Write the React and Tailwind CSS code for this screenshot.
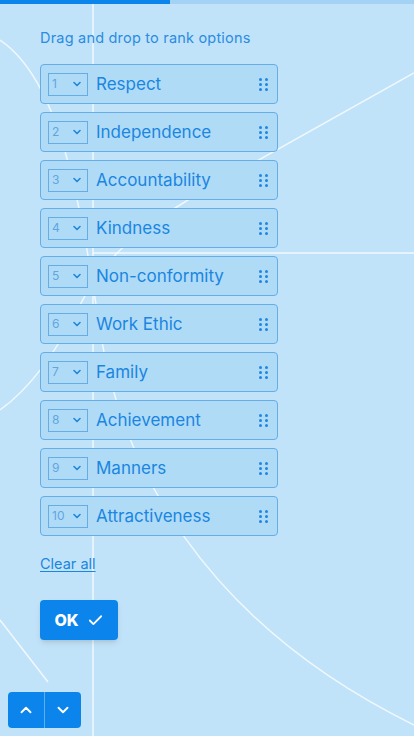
import { ChevronDown, ChevronUp, Check } from "lucide-react";

const options = [
  "Respect",
  "Independence",
  "Accountability",
  "Kindness",
  "Non-conformity",
  "Work Ethic",
  "Family",
  "Achievement",
  "Manners",
  "Attractiveness",
];

// background decoration lines
const Lines = () => (
  <svg className="absolute inset-0 pointer-events-none" width="414" height="736" viewBox="0 0 414 736" fill="none">
    <g stroke="#ffffff" strokeOpacity="0.75" strokeWidth="1.5">
      <line x1="93" y1="0" x2="93" y2="736" />
      <line x1="93" y1="253" x2="414" y2="253" />
      <path d="M0 40 C 60 80, 80 200, 100 330 C 120 460, 200 620, 414 725" />
      <path d="M414 73 L 200 193 C 130 233, 100 265, 80 305 C 60 345, 35 385, 0 410" />
      <path d="M0 620 L 48 682" />
    </g>
  </svg>
);

const Dots = () => (
  <div className="grid grid-cols-2 gap-x-[3px] gap-y-[2px]">
    {[0, 1, 2, 3, 4, 5].map((i) => (
      <span key={i} className="w-[3px] h-[3px] rounded-full bg-[#1f86dc]" />
    ))}
  </div>
);

const RankItem = ({ index, label }) => (
  <div className="h-10 w-[238px] flex items-center pl-[7px] pr-[9px] rounded border border-[#66ade8] bg-[#b0dbf7]">
    <div className="w-10 h-[23px] flex items-center justify-between pl-[3px] pr-[4px] border border-[#66ade8]">
      <span className="text-[12px] text-[#5ea6e3] leading-none">{index}</span>
      <ChevronDown size={12} strokeWidth={3.2} className="text-[#1f86dc]" />
    </div>
    <span className="ml-2 text-[17px] text-[#1a86df] flex-1 leading-none">{label}</span>
    <Dots />
  </div>
);

export default function App() {
  return (
    <div
      className="relative w-[414px] h-[736px] overflow-hidden bg-[#c1e3f9]"
      style={{ fontFamily: "Inter, 'Noto Sans', sans-serif" }}
    >
      <Lines />
      <div className="relative flex h-1">
        <div className="w-[170px] bg-[#0b85ec]" />
        <div className="flex-1 bg-[#a3d2f5]" />
      </div>

      <div className="relative px-10">
        <p className="mt-[26px] text-[14.5px] tracking-[0.2px] leading-4 text-[#2a8ce0]">Drag and drop to rank options</p>

        <div className="mt-[18px] flex flex-col gap-2">
          {options.map((label, i) => (
            <RankItem key={label} index={i + 1} label={label} />
          ))}
        </div>

        <button className="mt-[20px] block text-[14.5px] leading-4 text-[#1a86df] underline underline-offset-2">
          Clear all
        </button>

        <button className="mt-[28px] w-[78px] h-10 flex items-center justify-center gap-2 rounded bg-[#0b85ec] text-white font-extrabold text-[16px] shadow-md">
          OK
          <Check size={17} strokeWidth={2.5} />
        </button>
      </div>

      <div className="absolute left-2 top-[692px] flex h-9 rounded overflow-hidden bg-[#0b85ec]">
        <button className="w-9 flex items-center justify-center text-white">
          <ChevronUp size={18} strokeWidth={2.5} />
        </button>
        <div className="w-px bg-[#5cb0f2]" />
        <button className="w-9 flex items-center justify-center text-white">
          <ChevronDown size={18} strokeWidth={2.5} />
        </button>
      </div>
    </div>
  );
}
